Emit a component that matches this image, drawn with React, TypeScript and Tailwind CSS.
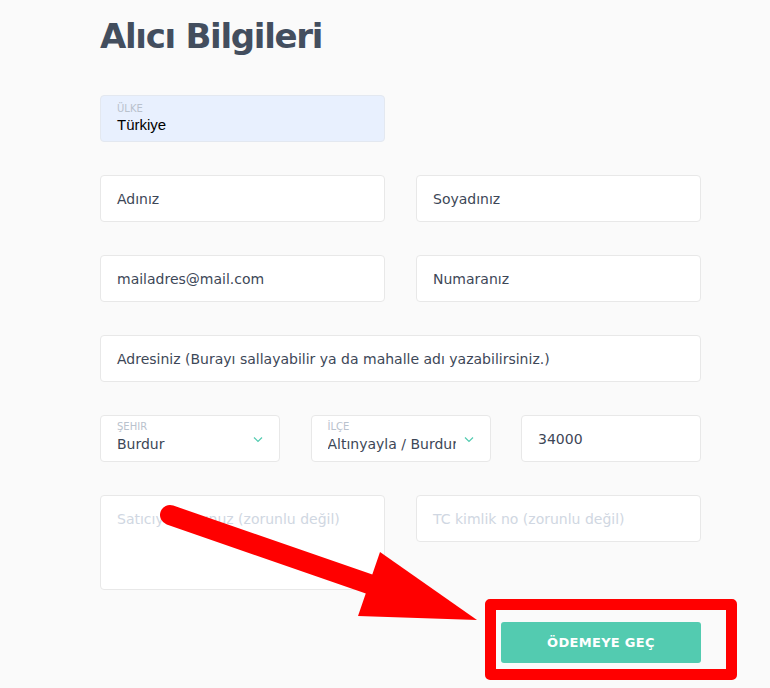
import React from "react";

const font = { fontFamily: '"DejaVu Sans", "Noto Sans", sans-serif' };

function Chevron() {
  return (
    <svg width="10" height="7" viewBox="0 0 10 7" className="absolute right-[16px] top-[20px]">
      <path d="M1 1.5 L5 5.5 L9 1.5" fill="none" stroke="#52cbb0" strokeWidth="1.2" />
    </svg>
  );
}

function Field({ text, placeholder = false }: { text: string; placeholder?: boolean }) {
  return (
    <div className="h-[47px] rounded-[4px] border border-[#e8e8e8] bg-white flex items-center pl-[16px] pt-[2px] overflow-hidden">
      <span className={`text-[14px] whitespace-nowrap ${placeholder ? "text-[#d0d7e2]" : "text-[#3d4757]"}`}>{text}</span>
    </div>
  );
}

function SelectField({ label, value }: { label: string; value: string }) {
  return (
    <div className="relative h-[47px] rounded-[4px] border border-[#e8e8e8] bg-white pl-[16px] pr-[34px] pt-[5px] overflow-hidden">
      <div className="text-[10px] leading-[12px] text-[#b9c2cd]">{label}</div>
      <div className="mt-[1px] text-[14px] leading-[20px] text-[#3d4757] whitespace-nowrap overflow-hidden">{value}</div>
      <Chevron />
    </div>
  );
}

export default function App() {
  return (
    <div className="relative w-[770px] h-[688px] bg-[#fafafa] overflow-hidden" style={font}>
      <div className="pl-[100px] w-[701px]">
        <h1 className="pt-[14px] text-[34px] leading-[44px] font-bold text-[#434e5e] tracking-[-1.3px]">Alıcı Bilgileri</h1>

        <div className="mt-[37px] grid grid-cols-2 gap-x-[31px] gap-y-[33px]">
          <div className="h-[47px] rounded-[4px] border border-[#e3e8f0] bg-[#e8f0fe] pl-[16px] pt-[7px]">
            <div className="text-[10px] leading-[12px] text-[#b9c2cd]">ÜLKE</div>
            <div className="text-[15px] leading-[20px] text-black" style={{ fontFamily: '"Liberation Sans", Arial, sans-serif' }}>Türkiye</div>
          </div>
          <div />
          <Field text="Adınız" />
          <Field text="Soyadınız" />
          <Field text="mailadres@mail.com" />
          <Field text="Numaranız" />
          <div className="col-span-2">
            <Field text="Adresiniz (Burayı sallayabilir ya da mahalle adı yazabilirsiniz.)" />
          </div>
        </div>

        <div className="mt-[33px] grid grid-cols-3 gap-x-[30.5px]">
          <SelectField label="ŞEHIR" value="Burdur" />
          <SelectField label="İLÇE" value="Altınyayla / Burdur" />
          <Field text="34000" />
        </div>

        <div className="mt-[33px] grid grid-cols-2 gap-x-[31px] items-start">
          <div className="h-[95px] rounded-[4px] border border-[#e8e8e8] bg-white pl-[16px] pt-[11px]">
            <span className="text-[14px] text-[#d0d7e2] whitespace-nowrap">Satıcıya notunuz (zorunlu değil)</span>
          </div>
          <Field text="TC kimlik no (zorunlu değil)" placeholder />
        </div>

        <div className="mt-[32px] flex justify-end">
          <button className="w-[200px] h-[41px] rounded-[3px] bg-[#53cbb0] text-white text-[13px] font-bold tracking-[0.3px]">ÖDEMEYE GEÇ</button>
        </div>
      </div>

      {/* annotation overlay */}
      <div className="absolute left-[485px] top-[599px] w-[252px] h-[81px] border-[11px] border-[#ff0000] rounded-[5px]" />
      <svg className="absolute left-0 top-0" width="770" height="688" viewBox="0 0 770 688">
        <line x1="170" y1="515" x2="372" y2="585" stroke="#ff0000" strokeWidth="20" strokeLinecap="round" />
        <polygon points="380,552 358,616 477,620" fill="#ff0000" />
      </svg>
    </div>
  );
}
